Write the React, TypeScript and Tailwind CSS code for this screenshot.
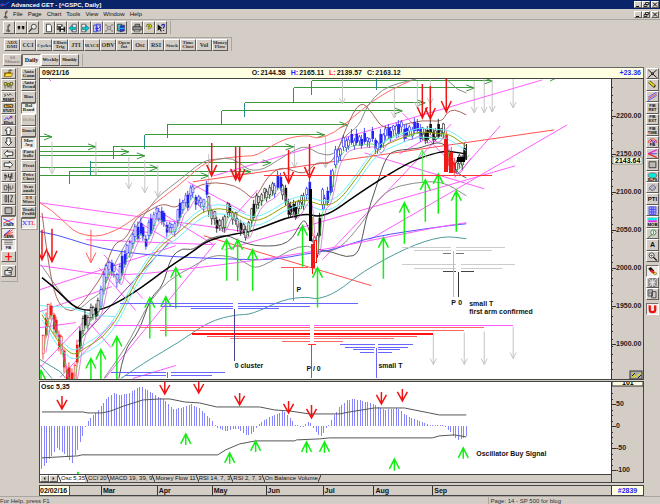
import React from "react";

type Point = [number, number];

const raised =
  "border border-t-white border-l-white border-r-[#5f5b57] border-b-[#5f5b57] bg-[#d4cdc6]";
const pressed =
  "border border-t-[#77726d] border-l-[#77726d] border-r-white border-b-white bg-[#eeeae6]";

const menus = ["File", "Page", "Chart", "Tools", "View", "Window", "Help"];

const studies = [
  "ADX DMI", "CCI", "Cycles", "Elliott Trig", "JTI", "MACD", "OBV",
  "Open Int", "Osc", "RSI", "Stock", "Time Clust", "Vol", "Money Flow",
];

const overlays = [
  "Auto Gann", "Auto Trend", "Bias", "Bol Band", "Delta", "Donch", "Mov Avg",
  "Para bolic", "Pivot", "Price Clust", "Seas onals", "T/I Wave", "Trade Profile",
];

const tabs = [
  "Osc 5,35", "CCI 20", "MACD 19, 39, 9", "Money Flow 11", "RSI 14, 7, 3",
  "RSI 2, 7, 3", "On Balance Volume",
];

// one 12x11 drawing for each toolbar button
const art: Record<string, React.ReactNode> = {
  clef: <path d="M4 10C2 8 4 7 6 8S7 10 5 10L5 4C4 2 7 0 7 2S4 4 4 5" stroke="#333" fill="none" />,
  quotes: <path d="M2 3h3v3L3 8V6H2zM7 3h3v3L8 8V6H7z" fill="#111" />,
  find: <><circle cx="7" cy="4" r="3" fill="#eee" stroke="#333" /><path d="M5 6L1 10" stroke="#333" strokeWidth="1.5" /></>,
  page: <path d="M3 1h4l2 2v7H3z" fill="#fff" stroke="#333" />,
  save: <><rect x="1" y="1" width="7" height="7" fill="#555" /><path d="M4 4h7v6H4z" fill="#222" /><path d="M6 4h3v2H6zM6 8h3v2H6zM2 2h4v1H2z" fill="#fff" /></>,
  prev: <><path d="M5 1h5v9H5z" fill="#eee" stroke="#555" /><path d="M1 5.500l4-3v2h4v3H5v2z" fill="#0cc" stroke="#135" strokeWidth=".5" /></>,
  next: <><path d="M2 1h5v9H2z" fill="#eee" stroke="#555" /><path d="M11 5.500l-4-3v2H3v3h4v2z" fill="#0cc" stroke="#135" strokeWidth=".5" /></>,
  copy: <><path d="M2 2h4v8H2zM5 1h5v8H5z" fill="#dde" stroke="#33c" /><path d="M4 6h4M6 4v5M8 2l2 2-2 2" stroke="#22f" fill="none" /></>,
  shrink: <path d="M2 1l3 3M10 1L7 4M2 10l3-3M10 10L7 7M4 4h4v3H4zM1 2h2M9 2h2M1 9h2M9 9h2" stroke="#777" fill="none" />,
  pages: <><path d="M2 1h5v8H2z" fill="#5cc" stroke="#234" /><path d="M5 3l5-1v7L5 10zM3 6h6" fill="#33e" stroke="#124" strokeWidth=".7" /><path d="M4 6h6" stroke="#0ee" /></>,
  print: <><path d="M3 4l1-3h5v3M1 4h10v4H1z" fill="#999" stroke="#333" /><path d="M3 8h6v2H3z" fill="#eed" stroke="#333" strokeWidth=".7" /></>,
  help: <><path d="M4 4c0-3 5-3 4 0L6 6v1" stroke="#333" strokeWidth="2.500" fill="none" /><path d="M4 4c0-3 5-3 4 0L6 6v1M6 9v1" stroke="#dd0" strokeWidth="1.500" fill="none" /></>,
  whats: <><path d="M2 1v8l2-2 2 3 1-1-2-3h3z" fill="#111" /><path d="M7 3c0-3 4-2 3 0L9 5v1M9 8v1" stroke="#22a" strokeWidth="1.500" fill="none" /></>,
  folder: <><path d="M1 4h4l1-1h3v6H1z" fill="#886600" /><path d="M3 5h8L9 9H1z" fill="#fd3" stroke="#320" strokeWidth=".5" /><path d="M6 2l3-1 1 1" stroke="#222" fill="none" /></>,
  users: <><path d="M1 3h3v3H1zM8 3h3v3H8zM5 4h2v3H5zM2 6v4M9 6v4M4 8h4" stroke="#332" fill="#ee3" strokeWidth=".8" /></>,
  reset: <><path d="M1 2l2 2-2 1M4 2l2 2 2-2 2 2" stroke="#333" fill="none" /><text x="6" y="10" fontSize="4" fontWeight="bold" textAnchor="middle">RESET</text></>,
  study: <><path d="M1 2h10v3H1z" fill="#ee4" stroke="#222" /><path d="M3 3l6 1" stroke="#a00" /><text x="6" y="10" fontSize="4" fontWeight="bold" textAnchor="middle">STUDY</text></>,
  elliott: <><path d="M1 6l3-3 2 2 3-4 1 3" stroke="#22f" fill="none" /><path d="M8 4l3-2" stroke="#e22" /><text x="6" y="10" fontSize="4" fontWeight="bold" textAnchor="middle">Elliott</text></>,
  up: <path d="M6 1L2 5h2v5h4V5h2z" fill="#fff" stroke="#222" />,
  down: <path d="M6 10L2 6h2V1h4v5h2z" fill="#fff" stroke="#222" />,
  left: <path d="M1 5.500l4-4v2h6v4H5v2z" fill="#fff" stroke="#222" />,
  right: <path d="M11 5.500l-4-4v2H1v4h6v2z" fill="#fff" stroke="#222" />,
  expand: <path d="M2 2v7M1 4h3v3M6 2v4h3V2M8 5v5M10 1v7" stroke="#222" fill="none" />,
  squeeze: <path d="M1 3v5h3V3zM6 1v9M8 3v5l3-2V3M4 5h4" stroke="#333" fill="none" strokeWidth=".8" />,
  sigma: <path d="M2 2v7h2V2zM6 1v9M8 2h3L8 9h3" stroke="#333" fill="none" />,
  box: <path d="M2 2h8v7H2z" fill="#bbb7b2" stroke="#333" />,
  lines: <><path d="M0 2l12 6" stroke="#22f" /><path d="M0 7l12-5" stroke="#f33" /><text x="6" y="11" fontSize="4" fontWeight="bold" textAnchor="middle">LINES</text></>,
  gann: <><path d="M1 7l10-6M1 7l10-3M1 7h10" stroke="#e33" /><path d="M1 7l7-6" stroke="#22f" /><text x="6" y="11" fontSize="4" fontWeight="bold" textAnchor="middle">GANN</text></>,
  fib: <><path d="M1 1h10M1 3h10M1 5h10" stroke="#555" strokeWidth=".8" /><text x="6" y="10" fontSize="4" fontWeight="bold" textAnchor="middle">FIB</text></>,
  plus: <path d="M6 1v9M2 5.500h8" stroke="#f11" strokeWidth="1.500" />,
  hand: <path d="M2 5h7v5H2zM4 5l2-3h4v3M6 7h3" fill="#eee" stroke="#333" />,
  cross: <path d="M1 1l4 3.500h2L11 1M1 10l4-3.500h2L11 10M5 4.500v2M7 4.500v2" stroke="#111" strokeWidth="1.100" fill="none" />,
  pencil: <><path d="M2 2l7 6" stroke="#330" strokeWidth="3.500" /><path d="M2 2l6 5" stroke="#ed2" strokeWidth="2" /></>,
  channel: <><path d="M1 8l10-6" stroke="#e33" /><path d="M1 6l10-6M1 10l10-6" stroke="#44f" /></>,
  fan: <><path d="M1 5.500h10" stroke="#33f" /><path d="M1 5.500L11 1" stroke="#e2c" strokeWidth="1.500" /><path d="M1 5.500L11 10" stroke="#e22" strokeWidth="1.500" /></>,
  arcs: <><path d="M1 7a5 5 0 0 1 10 0M3 7a3 3 0 0 1 6 0" stroke="#e33" fill="none" /><path d="M4 3l3 4 3-3" stroke="#22f" fill="none" /><text x="6" y="10" fontSize="4" fontWeight="bold" textAnchor="middle">FIB</text></>,
  ellipse: <><ellipse cx="6" cy="4" rx="5" ry="3" fill="#0ed" stroke="#a33" strokeWidth=".7" /><text x="6" y="11" fontSize="4" fontWeight="bold" textAnchor="middle">ELPS</text></>,
  zig: <><path d="M2 6l4-4 4 4-4 3z" stroke="#558" fill="none" /><path d="M1 9L9 1M4 9l7-6" stroke="#77a" strokeWidth=".8" /></>,
  grid: <path d="M2 1h8v9H2zM5 1v9M7 1v9M2 4h8M2 7h8" stroke="#44f" fill="#aaf" />,
  mob: <><path d="M1 1h10v3H1z" fill="#0ee" /><path d="M1 4h10v2H1z" fill="#e2e" /><text x="6" y="11" fontSize="5" fontWeight="bold" textAnchor="middle">MOB</text></>,
  clock: <><circle cx="7" cy="4" r="3" fill="#fff" stroke="#283" /><path d="M7 2v4M5 7L1 10" stroke="#273" /></>,
  zoom: <><circle cx="5" cy="4" r="3" fill="#fff" stroke="#333" /><path d="M5 3v3M3 4h4" stroke="#333" strokeWidth=".7" /><path d="M7 6l4 4" stroke="#222" strokeWidth="1.500" /></>,
  eraser: <><path d="M1 3l3-2 4 4-3 2z" fill="#111" /><path d="M5 4l4 3-2 2-4-3z" fill="#e22" /><path d="M8 7l3 1-1 2-3-1z" fill="#ee2" stroke="#222" strokeWidth=".4" /></>,
  pattern: <><path d="M2 1h8v9H2z" fill="#aaa" stroke="#555" /><path d="M2 1l8 9M10 1L2 10M6 1v9M2 5h8" stroke="#eee" strokeWidth=".8" /></>,
  sheets: <path d="M1 1h5v7H1zM6 3h4v7H5V3M3 3v3" fill="#ccc" stroke="#444" />,
  magnet: <><path d="M3 1v5a3 3 0 0 0 6 0V1" stroke="#e11" strokeWidth="2.500" fill="none" /><path d="M2 1h3M8 1h3" stroke="#fff" strokeWidth="1" /></>,
};

function Icon({ name }: { name: string }) {
  return (
    <svg viewBox="0 0 12 11" className="mx-auto block h-full max-h-[10px] w-full max-w-[11px]" aria-hidden="true">
      {art[name]}
    </svg>
  );
}

function IconButton({ name, down }: { name: string; down?: boolean }) {
  return (
    <button aria-label={name} className={`min-h-0 w-full flex-1 overflow-hidden ${down ? pressed : raised}`}>
      <Icon name={name} />
    </button>
  );
}

function WindowButtons() {
  return (
    <div className="ml-auto flex pr-px">
      {["minimize", "restore", "close"].map((label) => (
        <button key={label} aria-label={label} className={`h-[7px] w-[8px] last:ml-px ${raised}`}>
          <svg viewBox="0 0 6 5" className="block h-full w-full" stroke="#111" fill="none">
            {label === "minimize" && <path d="M1 4.500h3" />}
            {label === "restore" && <path d="M2.500 .5h3v2h-3zM1 2.500h3v2H1z" strokeWidth=".8" />}
            {label === "close" && <path d="M1 .5l4 4M5 .5l-4 4" />}
          </svg>
        </button>
      ))}
    </div>
  );
}

function at(path: Point[], x: number) {
  for (let i = 1; i < path.length; i++) {
    const [x0, y0] = path[i - 1];
    const [x1, y1] = path[i];
    if (x <= x1) return y0 + ((y1 - y0) * (x - x0)) / (x1 - x0);
  }
  return path[path.length - 1][1];
}

function Arrow({ x, from, to, color, width = 1, head = 5, wing = 9 }: {
  x: number; from: number; to: number; color: string; width?: number; head?: number; wing?: number;
}) {
  const back = to > from ? to - wing : to + wing;
  return (
    <path
      d={`M${x} ${from}V${to}M${x - head} ${back}L${x} ${to}L${x + head} ${back}`}
      stroke={color}
      strokeWidth={width}
      fill="none"
    />
  );
}

// start x, y and end x of the time projections
const projections = [
  [40, 137, 52], [40, 147, 96], [40, 152, 129], [40, 156, 145], [40, 168, 158], [40, 176, 209],
  [70, 172, 251], [91, 163, 271], [114, 147, 294], [145, 135, 325], [168, 125, 348],
  [222, 111, 403], [245, 103, 426], [294, 88, 475], [312, 81, 493],
];
const steps = [
  [70, 171, 184], [91, 161, 175], [114, 146, 159], [145, 135, 149], [168, 124, 138],
  [222, 111, 124], [245, 103, 117], [294, 88, 102], [312, 81, 95], [377, 79, 90],
];
const greyArrows = [
  [52, 142, 174], [96, 142, 175], [129, 157, 189], [145, 160, 193], [158, 165, 197], [209, 154, 187],
  [295, 144, 168], [326, 136, 168], [343, 79, 104], [395, 88, 118], [418, 81, 108], [431, 80, 104],
  [475, 81, 113], [485, 79, 113], [493, 80, 112], [514, 79, 108],
  [434, 335, 365], [465, 333, 365], [485, 332, 365], [514, 327, 359],
];
const sellArrows = [
  [42, 230, 260], [52, 229, 262], [212, 143, 176], [236, 147, 180], [240, 147, 181],
  [289, 150, 183], [310, 144, 178], [423, 84, 118], [431, 86, 119], [447, 79, 112],
];
const buyArrows = [
  [41, 385, 371], [91, 385, 359], [101, 385, 350], [117, 385, 337], [150, 339, 298], [166, 337, 297],
  [176, 309, 268], [227, 281, 240], [238, 281, 240], [253, 291, 250], [303, 267, 226], [318, 308, 268],
  [384, 279, 238], [405, 244, 203], [426, 222, 180], [439, 214, 174], [457, 232, 191],
];
const trendLines = [
  [40, 203, 246, 232], [40, 217, 150, 233], [86, 240, 214, 245], [40, 290, 176, 246], [40, 312, 112, 287],
  [214, 176, 543, 80], [225, 250, 516, 166], [370, 240, 568, 125], [323, 260, 452, 124], [455, 178, 501, 126],
  [365, 153, 485, 189], [403, 113, 452, 163], [188, 182, 246, 213], [155, 209, 214, 245], [105, 379, 216, 243],
  [133, 379, 176, 366], [84, 317, 111, 348], [99, 268, 136, 311], [104, 255, 143, 299], [40, 368, 86, 320],
  [40, 328, 76, 323], [60, 378, 114, 322], [138, 222, 172, 242], [236, 215, 258, 190], [400, 154, 446, 128], [49, 79, 51, 81],
];
const bars = [
  [114, 310, 326, "#f5f"], [314, 514, 326, "#f5f"],
  [139, 310, 328, "#f66"], [314, 485, 328, "#f66"], [160, 310, 331, "#f66"], [314, 465, 331, "#f66"],
  [207, 310, 337, "#f55"], [314, 418, 337, "#f55"], [230, 310, 339, "#f77"], [314, 395, 339, "#f77"],
  [282, 310, 342, "#f66"], [314, 344, 342, "#f66"], [308, 316, 345, "#f33"],
  [120, 233, 304, "#66f"], [238, 359, 304, "#66f"], [161, 233, 307, "#66f"], [238, 310, 307, "#66f"],
  [191, 233, 309, "#66f"], [238, 279, 309, "#66f"], [111, 166, 373, "#66f"], [171, 225, 373, "#66f"],
  [125, 166, 376, "#66f"], [171, 212, 376, "#66f"],
  [341, 376, 345, "#66f"], [379, 414, 345, "#66f"], [346, 376, 348, "#66f"], [379, 409, 348, "#66f"],
  [354, 375, 350, "#66f"], [379, 401, 350, "#66f"], [361, 375, 353, "#66f"], [379, 393, 353, "#66f"],
  [403, 452, 248, "#ccc"], [457, 506, 248, "#ccc"], [415, 452, 251, "#ccc"], [457, 493, 251, "#ccc"],
  [444, 452, 254, "#777"], [457, 465, 254, "#777"], [403, 457, 265, "#ccc"], [462, 516, 265, "#ccc"],
  [415, 457, 269, "#ccc"], [462, 503, 269, "#ccc"], [444, 457, 272, "#444"], [462, 475, 272, "#444"],
  [281, 308, 268, "#f55"], [264, 493, 176, "#f33"],
] as [number, number, number, string][];
const stems = [
  [235, 309, 361, "#448"], [168, 373, 379, "#66f"], [377, 348, 379, "#66f"], [312, 345, 379, "#f33"],
  [294, 268, 301, "#f55"], [454, 251, 297, "#bbb"], [459, 272, 297, "#333"],
] as [number, number, number, string][];

const priceMid: Point[] = [
  [42, 345], [45, 325], [49, 305], [55, 330], [60, 345], [65, 372], [70, 380], [74, 372], [78, 342], [82, 325],
  [88, 318], [92, 312], [97, 309], [100, 298], [103, 282], [108, 264], [114, 272], [118, 280], [122, 260],
  [128, 250], [133, 236], [139, 227], [145, 240], [150, 226], [155, 214], [160, 214], [166, 226], [172, 228],
  [176, 222], [180, 206], [186, 202], [191, 190], [196, 200], [202, 203], [206, 193], [210, 212], [216, 222],
  [222, 226], [228, 208], [233, 216], [238, 224], [244, 232], [248, 228], [253, 208], [260, 197], [266, 193],
  [272, 190], [279, 181], [283, 190], [288, 208], [294, 212], [300, 203], [305, 194], [309, 192], [312, 240],
  [316, 252], [319, 226], [322, 200], [327, 198], [331, 182], [335, 160], [340, 150], [345, 143], [355, 140],
  [365, 140], [373, 138], [378, 148], [384, 134], [392, 132], [400, 126], [405, 133], [412, 130], [417, 127],
  [424, 137], [430, 131], [436, 136], [441, 127], [444, 132], [448, 155], [453, 166], [457, 166], [462, 158], [468, 150],
];

const redBand: Point[] = [
  [40, 203], [53, 211], [68, 226], [78, 234], [96, 237], [108, 234], [123, 227], [149, 208], [179, 186], [203, 164],
  [218, 159], [246, 156], [257, 156], [283, 139], [308, 135], [318, 139], [335, 133], [353, 118], [373, 101], [393, 89], [413, 80],
];
const greyBand: Point[] = [
  [41, 265], [52, 281], [66, 300], [79, 311], [90, 300], [101, 294], [112, 270], [125, 245], [138, 224], [151, 206],
  [159, 196], [179, 181], [203, 161], [218, 159], [233, 158], [246, 168], [253, 171], [265, 169], [277, 161],
  [297, 149], [308, 146], [318, 154], [335, 156], [345, 136], [360, 126], [367, 106], [383, 89], [400, 83], [417, 79],
];
const brownBand: Point[] = [
  [42, 213], [48, 263], [56, 300], [66, 311], [76, 311], [93, 290], [104, 273], [114, 243], [126, 240], [136, 218],
  [146, 213], [163, 203], [176, 209], [185, 200], [196, 186], [216, 182], [236, 186], [246, 193], [255, 201],
  [268, 176], [283, 166], [305, 176], [317, 161], [333, 166], [347, 126], [361, 100], [373, 113], [383, 129],
  [400, 126], [423, 120], [443, 122], [447, 113], [455, 109], [467, 115],
];
const greyLow: Point[] = [
  [104, 379], [123, 353], [138, 325], [151, 300], [169, 280], [193, 267], [213, 255], [233, 257], [246, 263],
  [255, 269], [270, 263], [290, 250], [308, 245], [323, 252], [340, 250], [363, 223], [373, 206], [390, 189],
  [413, 183], [443, 181], [467, 196],
];
const darkLow: Point[] = [
  [119, 379], [124, 350], [139, 333], [151, 297], [163, 287], [171, 257], [183, 248], [193, 251], [209, 238],
  [228, 235], [240, 242], [260, 247], [290, 245], [303, 219], [308, 224], [315, 250], [333, 252], [347, 258],
  [360, 254], [366, 220], [377, 186], [387, 156], [397, 150], [420, 149], [440, 141], [450, 149], [457, 173], [467, 178],
];
const blackAvg: Point[] = [
  [42, 278], [54, 287], [73, 307], [86, 311], [103, 310], [123, 300], [143, 287], [163, 272], [176, 263], [193, 252],
  [209, 240], [236, 234], [250, 232], [267, 226], [287, 218], [308, 214], [318, 217], [332, 213], [353, 198],
  [383, 178], [413, 161], [433, 154], [447, 151], [467, 154],
];
const tealAvg: Point[] = [
  [121, 379], [146, 362], [179, 343], [209, 322], [236, 315], [252, 315], [283, 300], [308, 297], [317, 300],
  [337, 293], [363, 272], [407, 248], [443, 236], [467, 239],
];
const oliveAvg: Point[] = [
  [42, 315], [56, 340], [66, 350], [74, 356], [86, 348], [103, 338], [119, 317], [136, 280], [159, 247], [179, 233],
  [199, 214], [213, 209], [226, 209], [240, 216], [253, 222], [267, 218], [290, 203], [307, 199], [320, 206],
  [337, 204], [357, 179], [377, 149], [400, 139], [420, 131], [440, 134], [450, 134], [467, 146],
];
const blueAvg: Point[] = [
  [40, 232], [58, 235], [86, 245], [119, 252], [169, 257], [246, 260], [275, 260], [307, 254], [323, 252],
  [340, 248], [373, 237], [440, 227], [467, 224],
];
const pinkAvg: Point[] = [[40, 266], [70, 270], [100, 275], [136, 275], [190, 269], [246, 262], [307, 253], [370, 241], [440, 227], [467, 223]];

function curve(points: Point[], dy = 0) {
  let d = `M${points[0][0]} ${points[0][1] + dy}`;
  for (let i = 1; i < points.length - 1; i++) {
    const [x, y] = points[i];
    const [nx, ny] = points[i + 1];
    d += `Q${x} ${y + dy} ${(x + nx) / 2} ${(y + ny) / 2 + dy}`;
  }
  const [lx, ly] = points[points.length - 1];
  return `${d}L${lx} ${ly + dy}`;
}

function barColor(x: number) {
  if (x < 78) return "#f21818";
  if (x < 100) return "#111";
  if (x < 208) return "#2222f5";
  if (x < 274) return "#111";
  if (x < 282) return "#2222f5";
  if (x < 306) return "#111";
  if (x < 311) return "#2222f5";
  if (x < 317) return "#f21818";
  if (x < 320) return "#111";
  if (x < 422) return "#2222f5";
  if (x < 446) return "#111";
  if (x < 455) return "#f21818";
  return "#111";
}

function Candles() {
  const items = [];
  for (let i = 0; i < 161; i++) {
    const x = Math.round(42 + i * 2.64);
    const mid = at(priceMid, x);
    const noise = Math.sin(i * 12.9898) * 43758.5453;
    const r = noise - Math.floor(noise);
    const slope = at(priceMid, x + 2) - at(priceMid, x - 2);
    const body = Math.round(Math.min(18, 2 + r * 7 + Math.abs(slope) * 0.6));
    const top = Math.round(mid - body / 2 + Math.sin(i * 2.3) * 3);
    const color = barColor(x);
    const solid = slope > 1 ? r > 0.25 : r > 0.7;
    items.push(
      <g key={i} stroke={color}>
        <path d={`M${x + 1} ${top - 1 - Math.round(r * 4)}V${top}M${x + 1} ${top + body}v${2 + Math.round((1 - r) * 4)}`} strokeWidth=".8" />
        {solid
          ? <rect x={x} y={top} width="2.600" height={body} fill={color} stroke="none" />
          : <rect x={x + 0.2} y={top} width="2" height={body} fill="#fff" strokeWidth=".6" />}
      </g>
    );
  }
  return <g>{items}</g>;
}

function PriceChart() {
  return (
    <svg viewBox="40 79 572 300" preserveAspectRatio="xMinYMin meet" className="block h-full w-full" role="img" aria-label="Daily price chart" fill="none">
      <g shapeRendering="crispEdges" stroke="#3a9a3a">
        {projections.map(([x, y, end]) => <path key={`${x}-${y}`} d={`M${x} ${y}H${end}`} />)}
      </g>
      <g stroke="#3a9a3a">
        {projections.map(([x, y, end]) => <path key={`${x}-${y}`} d={`M${end - 8} ${y - 3}L${end} ${y}L${end - 8} ${y + 3}`} />)}
        <path d="M551 81l6-3" />
      </g>
      <g shapeRendering="crispEdges" stroke="#288c8c">
        {steps.map(([x, y, end]) => <path key={x} d={`M${x} ${y}V${end}`} />)}
      </g>
      {greyArrows.map(([x, from, to]) => <Arrow key={`${x}-${to}`} x={x} from={from} to={to} color="#c4c4c4" head={3} wing={6} />)}
      <g stroke="#ff5cff">
        {trendLines.map(([a, b, c, d]) => <path key={`${a}-${b}-${c}`} d={`M${a} ${b}L${c} ${d}`} />)}
      </g>
      <path d="M78 342L169 243" stroke="#8a3a9a" />
      <path d="M193 182L555 130M204 236L372 286" stroke="#ff5050" />
      <path d={curve(redBand)} stroke="#ff6a60" />
      <path d={curve(greyBand)} stroke="#8c8c8c" />
      <path d="M447 79L458 89L467 93" stroke="#8c8c8c" />
      <path d={curve(brownBand)} stroke="#a8645c" />
      <path d={curve(greyLow)} stroke="#8c8c8c" />
      <path d={curve(darkLow)} stroke="#555" />
      <path d={curve(tealAvg)} stroke="#4c9c9c" />
      <path d="M40 360L60 372L66 379M40 365L52 379" stroke="#4c9c9c" />
      <path d="M40 306L70 308L96 316L115 317" stroke="#6ef0f8" />
      <path d={curve(blueAvg)} stroke="#5050ff" />
      <path d={curve(pinkAvg)} stroke="#ff5cff" />
      <path d={curve(blackAvg)} stroke="#000" strokeWidth="1.500" />
      <Candles />
      <path d={curve(oliveAvg, -4)} stroke="#6ef0f8" />
      <path d={curve(oliveAvg, 5)} stroke="#6ef0f8" />
      <path d={curve(oliveAvg)} stroke="#8ea400" />
      <path d={curve(priceMid, 2)} stroke="#40d040" strokeWidth=".7" transform="translate(2 3)" />
      <path d={curve(priceMid, 5)} stroke="#d050d0" strokeWidth=".7" transform="translate(4 3)" />
      <g shapeRendering="crispEdges">
        <rect x="309" y="189" width="3" height="52" fill="#000" />
        <rect x="311" y="244" width="4" height="24" fill="#f21818" />
        <rect x="315" y="241" width="2" height="22" stroke="#f21818" fill="#fff" />
        <rect x="445" y="139" width="4" height="33" fill="#f21818" />
        <rect x="450" y="153" width="4" height="20" fill="#f21818" />
        <path d="M313 264V274" stroke="#f21818" />
        <path d="M467 144V160" stroke="#222" />
        <rect x="458" y="157" width="8" height="5" fill="#000" />
      </g>
      {sellArrows.map(([x, from, to]) => <Arrow key={x} x={x} from={from} to={to} color="#f01414" width={1.5} head={5} wing={11} />)}
      <Arrow x={91} from={230} to={263} color="#ff5a5a" head={5} wing={10} />
      {buyArrows.map(([x, from, to]) => <Arrow key={x} x={x} from={from} to={to} color="#12ee12" width={1.5} head={5} wing={10} />)}
      <Arrow x={423} from={183} to={150} color="#50e850" head={4} wing={8} />
      <g shapeRendering="crispEdges">
        {bars.map(([a, b, y, color]) => <path key={`${a}-${y}`} d={`M${a} ${y}H${b}`} stroke={color} />)}
        {stems.map(([x, a, b, color]) => <path key={x} d={`M${x} ${a}V${b}`} stroke={color} />)}
        <path d="M192 334H310M314 334H434" stroke="#f11" strokeWidth="2" />
      </g>
      <g fill="#111" fontSize="7" fontWeight="bold">
        <text x="297" y="292">P</text>
        <text x="235" y="369">0 cluster</text>
        <text x="307" y="372">P / 0</text>
        <text x="379" y="369">small T</text>
        <text x="452" y="305">P</text>
        <text x="459" y="305">0</text>
        <text x="470" y="306">small T</text>
        <text x="470" y="314">first arm confirmed</text>
      </g>
    </svg>
  );
}

const oscLevels: Point[] = [
  [42, 469], [48, 462], [58, 448], [66, 455], [73, 463], [78, 450], [83, 436], [87, 424], [91, 418], [98, 411],
  [106, 400], [114, 393], [122, 395], [132, 392], [142, 386], [148, 390], [156, 395], [164, 399], [174, 409],
  [182, 408], [192, 404], [200, 408], [212, 420], [218, 428], [226, 431], [238, 428], [246, 435], [252, 434],
  [262, 422], [270, 417], [284, 411], [291, 418], [296, 425], [304, 426], [310, 421], [316, 431], [321, 438],
  [326, 430], [332, 420], [340, 407], [348, 400], [354, 399], [373, 403], [385, 410], [397, 408], [410, 417],
  [430, 425], [445, 425], [452, 433], [458, 441], [467, 436],
];

function Oscillator() {
  const columns = [];
  for (let i = 0; i < 165; i++) columns.push(Math.round(42 + i * 2.59));
  return (
    <svg viewBox="40 382 572 92" preserveAspectRatio="xMinYMin meet" className="block h-full w-full" role="img" aria-label="Oscillator" fill="none">
      <g shapeRendering="crispEdges" stroke="#8585ff">
        {columns.map((x) => <path key={x} d={`M${x} 426V${Math.round(at(oscLevels, x)) === 426 ? 427 : Math.round(at(oscLevels, x))}`} />)}
      </g>
      <path d="M42 412H83L88 413H102L111 411L124 406L143 400L160 399H170L185 402L200 403L217 407H260L275 410L290 411L310 414H340L350 412L375 408H405L415 410L430 413L440 415H467" stroke="#555" />
      <path d="M42 458L60 457L78 456L82 455H218L226 450L240 444L256 441H295L297 440L320 439L330 438H433L440 436L455 435L467 437" stroke="#555" />
      {[[62, 396, 409], [165, 382, 394], [199, 382, 393], [240, 393, 405], [289, 401, 413], [312, 405, 418], [382, 392, 404], [403, 389, 401]].map(([x, a, b]) => (
        <Arrow key={x} x={x} from={a} to={b} color="#f01414" width={1.5} wing={9} />
      ))}
      {[[186, 445, 434], [230, 464, 453], [256, 452, 441], [307, 453, 442], [325, 453, 442], [395, 471, 459], [464, 459, 448]].map(([x, a, b]) => (
        <Arrow key={x} x={x} from={a} to={b} color="#12ee12" width={1.5} wing={10} />
      ))}
      <rect x="77" y="472" width="2" height="2" fill="#1e1" />
      <g fill="#111" fontSize="7" fontWeight="bold">
        <text x="41" y="389">Osc 5,35</text>
        <text x="477" y="456">Oscillator Buy Signal</text>
      </g>
    </svg>
  );
}

function Axis({ box, labels, ticks, children }: {
  box: string; labels: [number, string][]; ticks: number[]; children?: React.ReactNode;
}) {
  return (
    <svg viewBox={box} preserveAspectRatio="xMinYMin meet" className="block h-full w-full">
      <g shapeRendering="crispEdges" stroke="#333">
        {ticks.map((y) => <path key={y} d={`M613 ${y}h1`} />)}
        {labels.map(([y]) => <path key={y} d={`M613 ${y}h4`} />)}
      </g>
      <g fontSize="7" fontWeight="bold" fill="#222">
        {labels.map(([y, label]) => <text key={y} x="617" y={y + 2}>{label}</text>)}
      </g>
      {children}
    </svg>
  );
}

const range = (from: number, to: number, step: number) =>
  Array.from({ length: Math.floor((to - from) / step) + 1 }, (_, i) => Math.round(from + i * step));

function Toolbars() {
  return (
    <div className="flex h-[48px] flex-col items-start justify-between border-t border-[#aaa59f] py-px">
      <div className="flex gap-1 border-r border-[#aaa59f] px-[3px]">
        {[
          ["clef", "quotes", "find"],
          ["page", "save", "prev", "next", "copy", "shrink", "pages"],
          ["print", "help", "whats"],
        ].map((group) => (
          <div key={group[0]} className="flex">
            {group.map((name) => (
              <div key={name} className="flex h-[13px] w-[12px]"><IconButton name={name} /></div>
            ))}
          </div>
        ))}
      </div>
      <div className="flex border-t border-r border-[#aaa59f] pt-px pr-[3px] pl-1 font-['Liberation_Serif',serif]">
        {studies.map((name) => (
          <button key={name} className={`flex h-[12px] w-4 items-center justify-center overflow-hidden text-center font-bold text-[#333] ${raised} ${name.includes(" ") ? "text-[5px] leading-[4px]" : name.length > 3 ? "text-[5px] leading-[5px]" : "text-[6px] leading-[6px]"}`}>
            {name}
          </button>
        ))}
      </div>
      <div className="flex border-r border-[#aaa59f] pr-[3px] pl-[3px] font-['Liberation_Serif',serif] text-[6px] leading-[6px] font-bold">
        <button className={`h-[12px] w-[19px] text-[5px] leading-[4px] text-[#8d8883] ${raised}`}>60 Minute</button>
        <button className={`h-[12px] w-[19px] ${pressed}`}>Daily</button>
        <button className={`h-[12px] w-[19px] overflow-hidden text-[5px] ${raised}`}>Weekly</button>
        <button className={`h-[12px] w-[19px] overflow-hidden text-[4px] ${raised}`}>Monthly</button>
      </div>
    </div>
  );
}

function LeftTools() {
  return (
    <div className="flex gap-[3px] pt-px pr-px pl-px">
      <div className="flex h-[214px] w-[17px] flex-col border-r border-b border-[#aaa59f] pr-px">
        <div className="flex h-[194px] flex-col">
          {["folder", "users", "reset", "study", "elliott", "up", "down", "left", "right", "expand", "squeeze", "sigma", "box", "lines", "gann", "fib", "plus"].map((name) => (
            <IconButton key={name} name={name} down={["lines", "gann", "fib"].includes(name)} />
          ))}
        </div>
        <div className="mt-[3px] flex h-[12px]"><IconButton name="hand" /></div>
      </div>
      <div className="flex h-[162px] w-[17px] flex-col border-r border-b border-[#aaa59f] pr-px font-['Liberation_Serif',serif] text-[5px] leading-[4px] font-bold">
        {overlays.map((name) => (
          <button key={name} className={`min-h-0 w-full flex-1 overflow-hidden text-center ${name === "Bol Band" || name === "Mov Avg" ? pressed : raised} ${name === "Delta" ? "text-[#9b958f]" : "text-[#222]"}`}>
            {name}
          </button>
        ))}
        <button className={`min-h-0 w-full flex-1 text-[7px] leading-[8px] font-normal ${pressed}`}>
          <span className="text-[#22f]">X</span><span className="text-[#22f]">T</span><span className="text-[#f22]">L</span>
        </button>
      </div>
    </div>
  );
}

function TextTool({ text, big }: { text: string; big?: boolean }) {
  return (
    <button className={`min-h-0 w-full flex-1 overflow-hidden text-center font-bold ${raised} ${big ? "text-[7px] leading-[8px]" : "text-[4px] leading-[4px]"}`}>
      {text}
    </button>
  );
}

function RightTools() {
  return (
    <div className="w-4 pt-px pr-px pl-[2px]">
      <div className="flex h-[194px] flex-col">
        <IconButton name="cross" />
        <IconButton name="pencil" />
        <IconButton name="channel" />
        <TextTool text="FIB RET" />
        <TextTool text="FIB EXT" />
        <TextTool text="FIB TIME" />
        <IconButton name="arcs" />
        <IconButton name="fan" />
        <IconButton name="box" />
        <IconButton name="ellipse" />
        <IconButton name="zig" />
        <button className={`min-h-0 w-full flex-1 overflow-hidden text-[6px] leading-[8px] font-bold ${raised}`}>PTI</button>
        <IconButton name="grid" />
        <IconButton name="mob" />
        <IconButton name="clock" />
        <TextTool text="A" big />
        <IconButton name="zoom" />
      </div>
      <div className="mt-[3px] flex h-[35px] flex-col">
        <IconButton name="eraser" down />
        <IconButton name="pattern" />
        <IconButton name="sheets" />
      </div>
      <div className="mt-[3px] flex h-[12px]"><IconButton name="magnet" down /></div>
    </div>
  );
}

function App() {
  return (
    <div className="flex h-screen flex-col overflow-hidden bg-[#d4cdc6] font-['Liberation_Sans',Arial,sans-serif] text-[6px] leading-[8px] text-[#111]">
      <header className="flex h-[9px] items-center bg-[#0a246a] font-bold text-white">
        <svg viewBox="0 0 9 7" className="mr-[2px] h-[7px] w-[9px]" fill="none">
          <path d="M0 4l3-1 2 1 4-3" stroke="#3050ff" />
          <path d="M1 5l3-1" stroke="#e22" />
        </svg>
        <h1>Advanced GET - [^GSPC, Daily]</h1>
        <WindowButtons />
      </header>
      <nav className="flex h-[10px] items-center">
        <div className="h-[9px] w-[13px]"><Icon name="clef" /></div>
        <div className="flex gap-[5px]">
          {menus.map((menu) => <button key={menu}>{menu}</button>)}
        </div>
        <WindowButtons />
      </nav>
      <Toolbars />

      <main className="flex min-h-0 flex-1">
        <LeftTools />
        <div className="grid min-w-0 flex-1 grid-rows-[11px_302fr_103fr_13px]">
          <div className="flex items-center border border-b-0 border-[#666] bg-[#ffffe1] px-[2px] text-[7px] font-bold">
            <span className="w-[35%]">09/21/16</span>
            <dl className="flex gap-[5px]">
              {[["O:", "2144.58", ""], ["H:", "2165.11", "text-[#22f]"], ["L:", "2139.57", "text-[#f22]"], ["C:", "2163.12", ""]].map(([key, value, color]) => (
                <div key={key} className="flex gap-px"><dt className={color}>{key}</dt><dd>{value}</dd></div>
              ))}
            </dl>
            <span className="ml-auto text-[#22f]">+23.36</span>
          </div>

          <section className="flex min-h-0 border border-[#444]">
            <div className="min-w-0 flex-1 bg-white"><PriceChart /></div>
            <div className="w-[32px] border-l border-[#333]">
              <Axis
                box="613 79 31 300"
                ticks={range(87, 376, 7.63)}
                labels={[[116, "2200.00"], [154, "2150.00"], [192, "2100.00"], [230, "2050.00"], [268, "2000.00"], [306, "1950.00"], [344, "1900.00"]]}
              >
                <rect x="614" y="157" width="29" height="7" fill="#ffffe1" stroke="#555" strokeWidth=".5" />
                <text x="616" y="163" fontSize="7" fontWeight="bold">2143.64</text>
                <rect x="631" y="371" width="12" height="8" fill="#aaa" stroke="#333" />
                <path d="M633 373l4 4 5-4M633 377h3M638 375h3" stroke="#dd2" fill="none" />
                <path d="M633 376l3-3M639 378l3-3" stroke="#222" />
              </Axis>
            </div>
          </section>

          <section className="mt-px flex min-h-0 border border-[#444]">
            <div className="flex min-w-0 flex-1 flex-col">
              <div className="min-h-0 flex-1 bg-white"><Oscillator /></div>
              <div className="flex h-[8px] items-center border-t border-[#444]">
                {["M4 1L2 3l2 2z", "M2 1l2 2-2 2z"].map((d, i) => (
                  <button key={d} aria-label={i ? "next tab" : "previous tab"} className={`h-[7px] w-[9px] ${raised}`}>
                    <svg viewBox="0 0 6 6" className="h-full w-full"><path d={d} fill="#111" /></svg>
                  </button>
                ))}
                {tabs.map((tab, i) => (
                  <button key={tab} className={`flex h-[7px] items-center leading-[7px] whitespace-nowrap ${i ? "" : "bg-white"}`}>
                    <svg viewBox="0 0 3 7" className="h-[7px] w-[3px]"><path d="M0 0l3 7" stroke="#333" /></svg>
                    {tab}
                    {i === tabs.length - 1 && <svg viewBox="0 0 3 7" className="h-[7px] w-[3px]"><path d="M3 0L0 7" stroke="#333" /></svg>}
                  </button>
                ))}
              </div>
            </div>
            <div className="w-[32px] border-l border-[#333]">
              <Axis
                box="613 382 31 100"
                ticks={range(393, 475, 5.5)}
                labels={[[404, "50"], [426, "0"], [448, "-50"], [470, "-100"]]}
              >
                <rect x="613" y="380" width="31" height="6" fill="#ffffe1" stroke="#333" />
                <text x="623" y="385" fontSize="7" fontWeight="bold">101</text>
              </Axis>
            </div>
          </section>

          <div className="mt-[2px] flex border border-[#444] text-[7px] leading-[9px] font-bold">
            <div className="grid min-w-0 flex-1 grid-cols-[61fr_56fr_55fr_54fr_57fr_51fr_59fr_179fr]">
              <span><time className="block w-[30px] border-r border-[#555] bg-[#ffffe1]">02/02/16</time></span>
              {["Mar", "Apr", "May", "Jun", "Jul", "Aug", "Sep"].map((month) => (
                <span key={month} className="border-l border-[#333] pl-px">{month}</span>
              ))}
            </div>
            <span className="w-[32px] border-l border-[#333] bg-[#ffffe1] text-center text-[#22f]">#2839</span>
          </div>
        </div>
        <RightTools />
      </main>

      <footer className="flex h-[8px] items-center border-t border-[#aaa59f] text-[#333]">
        <span className="w-[74%]">For Help, press F1</span>
        <span className="border-l border-[#aaa59f] pl-px">Page: 14 - SP 500 for blog</span>
      </footer>
    </div>
  );
}

export default App;
